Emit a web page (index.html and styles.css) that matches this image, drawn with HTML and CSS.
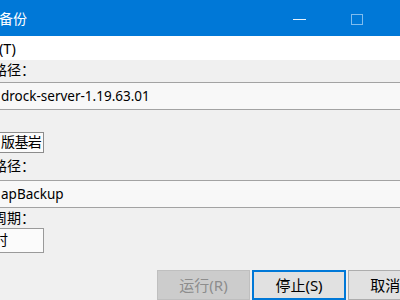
FILE: index.html
```html
<!DOCTYPE html>
<html lang="zh-CN">
<head>
<meta charset="utf-8">
<title>备份</title>
<link rel="stylesheet" href="styles.css">
</head>
<body>
<div class="win">
  <div class="titlebar">
    <span class="title">备份</span>
    <div class="caps">
      <div class="cap"><span class="ico-min"></span></div>
      <div class="cap"><span class="ico-max"></span></div>
      <div class="cap"></div>
    </div>
  </div>
  <div class="menubar"><span class="menu-item">(T)</span></div>
  <div class="content">
    <div class="label first">路径：</div>
    <div class="textbox tb1">drock-server-1.19.63.01</div>
    <div class="row"><div class="smallbtn">版基岩</div></div>
    <div class="label second">路径：</div>
    <div class="textbox tb2">apBackup</div>
    <div class="label third">周期：</div>
    <div class="row"><div class="combo"><span class="combo-text">时</span></div></div>
    <div class="actions">
      <div class="btn disabled">运行(R)</div>
      <div class="btn default">停止(S)</div>
      <div class="btn">取消(C)</div>
    </div>
  </div>
</div>
</body>
</html>
```
FILE: styles.css
```css
html, body {
  margin: 0;
  padding: 0;
  overflow: hidden;
  background: #f0f0f0;
}
body {
  width: 400px;
  height: 300px;
}
.win {
  width: 442px;
  height: 300px;
  font-family: "Noto Sans", "Noto Sans CJK SC", sans-serif;
  font-size: 14px;
  color: #000;
  background: #f0f0f0;
}
.titlebar {
  display: flex;
  height: 36px;
  background: #0078d7;
  color: #fff;
}
.title {
  flex: 1;
  line-height: 35px;
  padding-top: 1px;
  margin-left: -1px;
  font-size: 14px;
}
.caps {
  display: flex;
}
.cap {
  width: 57px;
  height: 36px;
  display: flex;
  align-items: center;
  justify-content: center;
}
.ico-min {
  width: 13px;
  height: 1px;
  background: #e6f2fc;
  margin-top: 2px;
}
.ico-max {
  width: 10px;
  height: 9px;
  border: 1px solid #7fbcee;
  margin-top: 3px;
}
.menubar {
  height: 24px;
  background: #fff;
  line-height: 23px;
  padding-top: 1px;
  box-sizing: border-box;
  font-size: 14.5px;
}
.menu-item {
  margin-left: -1px;
}
.label {
  line-height: 20px;
  height: 20px;
  margin-left: -7px;
}
.label.second {
  margin-top: 3px;
}
.textbox {
  box-sizing: border-box;
  height: 28px;
  margin-left: -2px;
  margin-right: 4px;
  border: 1px solid #a3a3a3;
  background: #f8f8f8;
  padding-left: 2px;
  line-height: 26px;
  font-size: 13.5px;
  white-space: nowrap;
}
.tb1 {
  margin-top: 2px;
}
.tb2 {
  margin-top: 4px;
}
.row {
  display: flex;
}
.smallbtn {
  box-sizing: border-box;
  margin-top: 22px;
  margin-left: -10px;
  width: 54px;
  height: 21px;
  border: 1px solid #8c8c8c;
  background: #fbfbfb;
  padding-left: 10px;
  line-height: 18px;
  letter-spacing: -0.6px;
  white-space: nowrap;
  overflow: hidden;
}
.combo {
  box-sizing: border-box;
  margin-left: -10px;
  width: 54px;
  height: 25px;
  border: 1px solid #9a9a9a;
  background: #fbfbfb;
  line-height: 22px;
  padding-left: 3px;
}
.actions {
  display: flex;
  justify-content: flex-end;
  gap: 2px;
  margin-top: 17px;
  padding-right: 1px;
}
.btn {
  box-sizing: border-box;
  flex-shrink: 0;
  width: 93px;
  height: 30px;
  border: 1px solid #adadad;
  background: #e1e1e1;
  text-align: center;
  line-height: 28px;
  font-size: 15px;
}
.btn.default {
  width: 94px;
  border: 2px solid #0078d7;
  line-height: 26px;
}
.btn.disabled {
  background: #cccccc;
  border-color: #bfbfbf;
  color: #8d8d8d;
}
```
